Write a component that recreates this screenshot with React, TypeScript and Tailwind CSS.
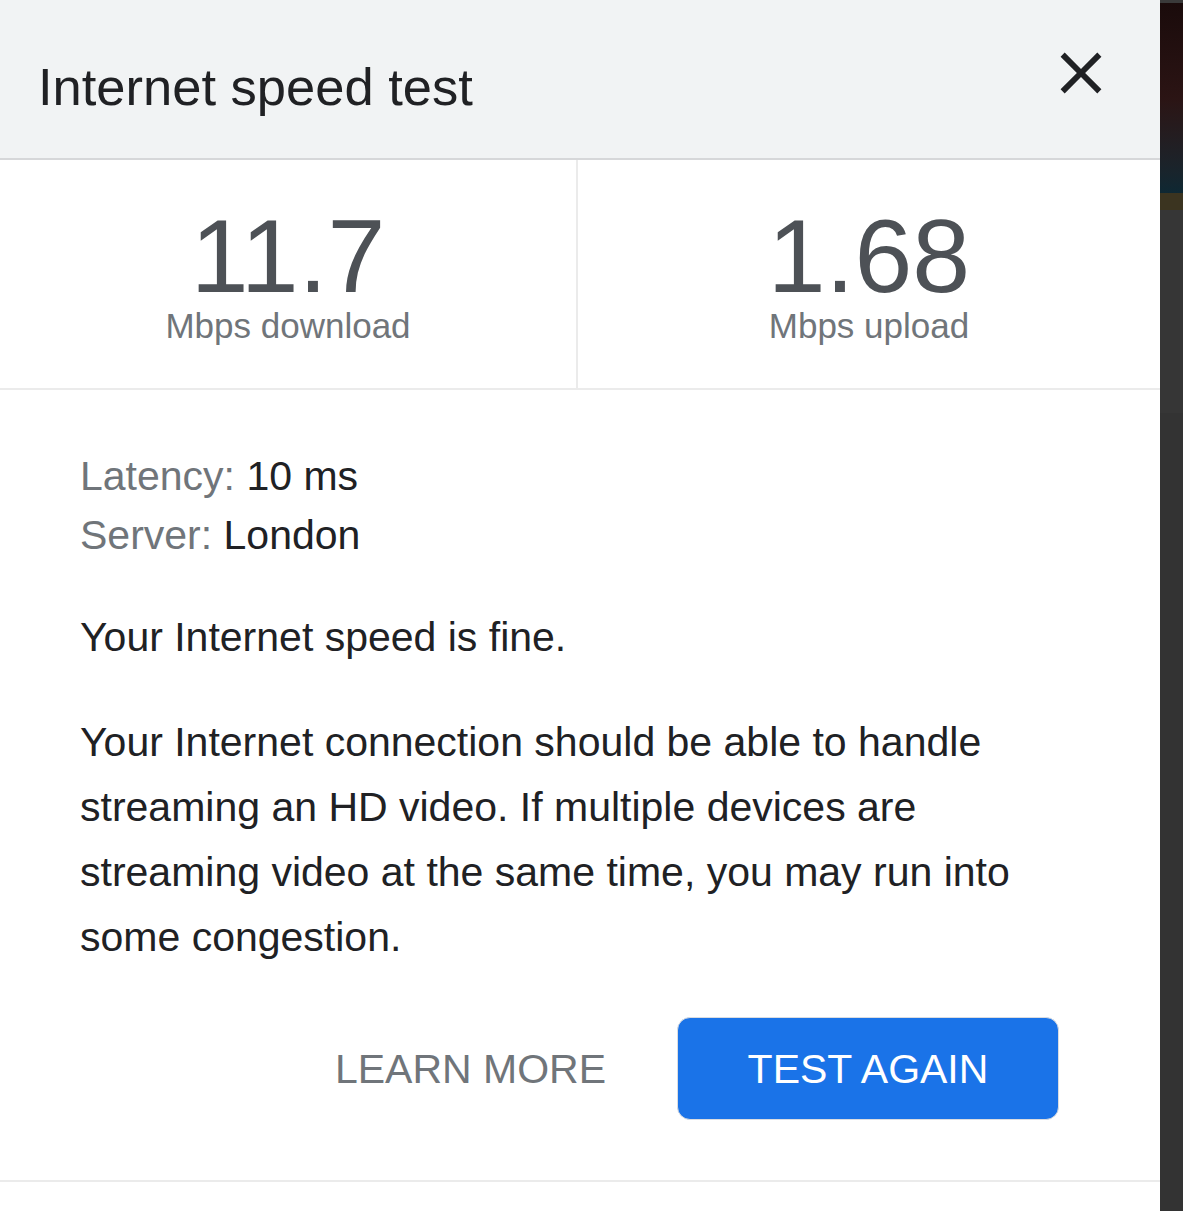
const font = { fontFamily: '"Liberation Sans", Arial, sans-serif' };

function CloseIcon() {
  return (
    <svg width="70" height="70" viewBox="0 0 24 24" className="mt-[38px] shrink-0">
      <path
        fill="#202124"
        d="M19 6.41L17.59 5 12 10.59 6.41 5 5 6.41 10.59 12 5 17.59 6.41 19 12 13.41 17.59 19 19 17.59 13.41 12z"
      />
    </svg>
  );
}

function Stat({ value, label, divider }: { value: string; label: string; divider?: boolean }) {
  return (
    <div
      className={`flex flex-col items-center pt-[46px] ${divider ? "w-[578px] border-r-2 border-[#ebebeb]" : "flex-1"}`}
    >
      <div className="text-[104px] leading-[100px] text-[#4d5156]">{value}</div>
      <div className="text-[35px] leading-[40px] text-[#70757a]">{label}</div>
    </div>
  );
}

export default function App() {
  return (
    <div className="flex h-[1211px] w-[1183px] overflow-hidden bg-white" style={font}>
      <div className="flex w-[1160px] shrink-0 flex-col">
        {/* header */}
        <div className="flex h-[160px] items-start justify-between border-b-2 border-[#d6d7d9] bg-[#f1f3f4] pl-[38px] pr-[44px]">
          <h1 className="pt-[57px] text-[52.5px] leading-[60px] text-[#202124]">Internet speed test</h1>
          <CloseIcon />
        </div>

        {/* speeds */}
        <div className="flex h-[230px] border-b-2 border-[#ebebeb]">
          <Stat value="11.7" label="Mbps download" divider />
          <Stat value="1.68" label="Mbps upload" />
        </div>

        {/* details */}
        <div className="flex flex-col border-b-2 border-[#ebebeb] px-[80px] pt-[57px] pb-[60px] text-[41px] text-[#202124]">
          <div className="leading-[59px]">
            <span className="text-[#70757a]">Latency:</span> 10 ms
          </div>
          <div className="leading-[59px]">
            <span className="text-[#70757a]">Server:</span> London
          </div>
          <p className="mt-[40px] leading-[65px]">Your Internet speed is fine.</p>
          <p className="mt-[40px] leading-[65px]">
            Your Internet connection should be able to handle streaming an HD video. If multiple devices are
            streaming video at the same time, you may run into some congestion.
          </p>
          <div className="mt-[47px] mr-[21px] flex items-center justify-end gap-[71px]">
            <button type="button" className="text-[41px] leading-[48px] text-[#70757a]">
              LEARN MORE
            </button>
            <button
              type="button"
              className="flex h-[103px] w-[382px] items-center justify-center rounded-[13px] border border-[#dadce0] bg-[#1a73e8] text-[41px] leading-[48px] text-white"
            >
              TEST AGAIN
            </button>
          </div>
        </div>
      </div>

      {/* page behind */}
      <div className="flex flex-1 flex-col bg-[#343434]">
        <div className="h-[3px] bg-[#3a3a3a]" />
        <div className="h-[190px] bg-gradient-to-b from-[#1a0b0b] via-[#2b1414] to-[#0e2833]" />
        <div className="h-[17px] bg-[#3b3420]" />
        <div className="h-[203px] bg-[#363636]" />
        <div className="flex-1 bg-[#333333]" />
      </div>
    </div>
  );
}
